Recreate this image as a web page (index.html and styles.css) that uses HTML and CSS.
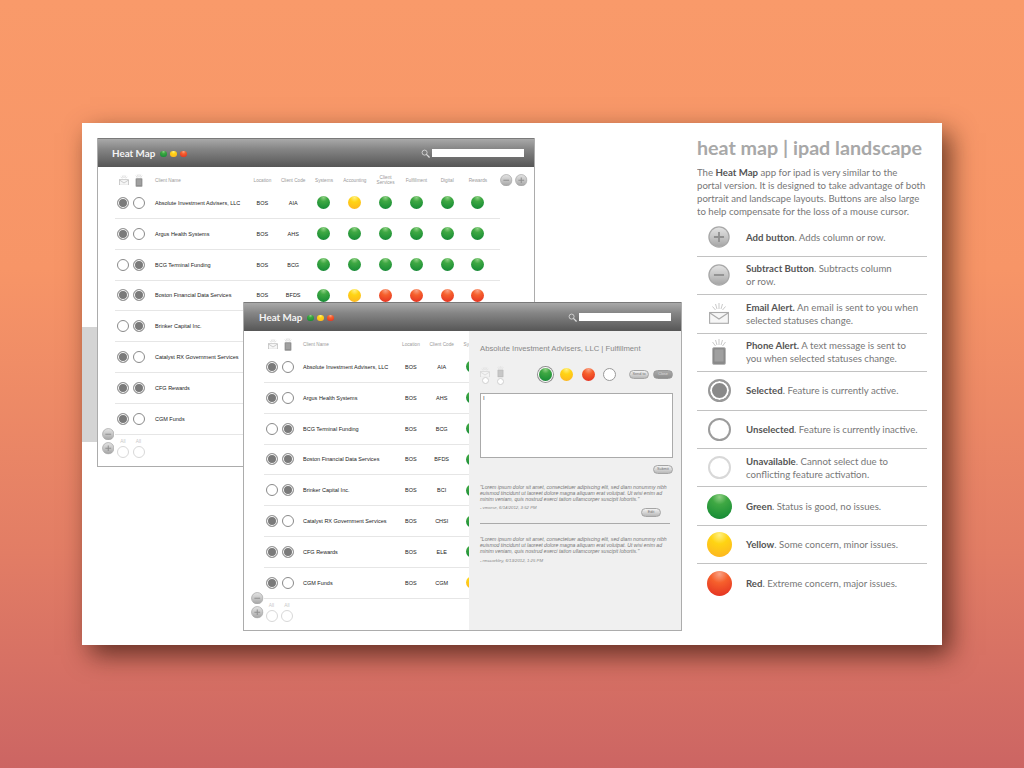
FILE: index.html
```html
<!DOCTYPE html>
<html>
<head>
    <title>Heat Map | iPad Landscape</title>
    <meta name="viewport" content="width=device-width, initial-scale=1">
    <link rel="stylesheet" href="styles.css">
</head>

<body>
    <svg class="icon-defs" width="0" height="0">
        <defs>
            <linearGradient id="btn-fill" x1="0" y1="0" x2="0" y2="1">
                <stop offset="0" stop-color="#e4e4e4"/>
                <stop offset="0.5" stop-color="#c6c6c6"/>
                <stop offset="1" stop-color="#a4a4a4"/>
            </linearGradient>
            <symbol id="icon-plus" viewBox="0 0 24 24">
                <circle cx="12" cy="12" r="11" fill="url(#btn-fill)" stroke="#a8a8a8" stroke-width="1.4"/>
                <path d="M12 6.5v11M6.5 12h11" stroke="#909090" stroke-width="2" fill="none"/>
            </symbol>
            <symbol id="icon-minus" viewBox="0 0 24 24">
                <circle cx="12" cy="12" r="11" fill="url(#btn-fill)" stroke="#a8a8a8" stroke-width="1.4"/>
                <path d="M6.5 12h11" stroke="#909090" stroke-width="2" fill="none"/>
            </symbol>
            <symbol id="icon-mail" viewBox="0 0 20 21">
                <path d="M10 0v6M6.5 1l1.5 5M13.500 1l-1.500 5M3.500 3.500l3 3.500M16.500 3.500l-3 3.500" stroke="#bbb" stroke-width="0.8" fill="none"/>
                <rect x="0.6" y="9.500" width="18.800" height="10.800" fill="#f6f6f6" stroke="#aaa" stroke-width="1.100"/>
                <path d="M1 10l9 6 9-6" stroke="#aaa" stroke-width="1.100" fill="none"/>
            </symbol>
            <symbol id="icon-phone" viewBox="0 0 20 26">
                <path d="M10 0v6M6.500 1l1.500 5M13.500 1l-1.500 5M3.500 3l3 4M16.500 3l-3 4" stroke="#bbb" stroke-width="0.8" fill="none"/>
                <rect x="3.500" y="8.500" width="13" height="17" rx="1.500" fill="#8a8a8a" stroke="#b5b5b5" stroke-width="0.800"/>
                <rect x="5.500" y="10.500" width="9" height="12" fill="#a0a0a0"/>
            </symbol>
        </defs>
    </svg>

    <div class="sheet">
        <div class="side-tab"></div>

        <!-- portal view, back window -->
        <div class="window window-back">
            <div class="titlebar">
                <span class="app-name">Heat Map</span>
                <span class="dot dot-tiny green"></span>
                <span class="dot dot-tiny yellow"></span>
                <span class="dot dot-tiny red"></span>
                <span class="search">
                    <svg class="search-icon" viewBox="0 0 10 10"><circle cx="4" cy="4" r="2.800" fill="none" stroke="#ddd" stroke-width="0.900"/><path d="M6 6l3.500 3.500" stroke="#ddd" stroke-width="1.400"/></svg>
                    <span class="search-box"></span>
                </span>
            </div>
            <div class="table">
                <div class="row row-head">
                    <div class="alerts">
                        <svg class="head-mail"><use href="#icon-mail"/></svg>
                        <svg class="head-phone"><use href="#icon-phone"/></svg>
                    </div>
                    <div class="name">Client Name</div>
                    <div class="cell">Location</div>
                    <div class="cell">Client Code</div>
                    <div class="cell">Systems</div>
                    <div class="cell">Accounting</div>
                    <div class="cell">Client Services</div>
                    <div class="cell">Fulfillment</div>
                    <div class="cell">Digital</div>
                    <div class="cell">Rewards</div>
                </div>
                <div class="row">
                    <div class="alerts"><span class="radio on"></span><span class="radio"></span></div>
                    <div class="name">Absolute Investment Advisers, LLC</div>
                    <div class="cell">BOS</div><div class="cell">AIA</div>
                    <div class="cell"><span class="dot green"></span></div>
                    <div class="cell"><span class="dot yellow"></span></div>
                    <div class="cell"><span class="dot green"></span></div>
                    <div class="cell"><span class="dot green"></span></div>
                    <div class="cell"><span class="dot green"></span></div>
                    <div class="cell"><span class="dot green"></span></div>
                </div>
                <div class="row">
                    <div class="alerts"><span class="radio on"></span><span class="radio"></span></div>
                    <div class="name">Argus Health Systems</div>
                    <div class="cell">BOS</div><div class="cell">AHS</div>
                    <div class="cell"><span class="dot green"></span></div>
                    <div class="cell"><span class="dot green"></span></div>
                    <div class="cell"><span class="dot green"></span></div>
                    <div class="cell"><span class="dot green"></span></div>
                    <div class="cell"><span class="dot green"></span></div>
                    <div class="cell"><span class="dot green"></span></div>
                </div>
                <div class="row">
                    <div class="alerts"><span class="radio"></span><span class="radio on"></span></div>
                    <div class="name">BCG Terminal Funding</div>
                    <div class="cell">BOS</div><div class="cell">BCG</div>
                    <div class="cell"><span class="dot green"></span></div>
                    <div class="cell"><span class="dot green"></span></div>
                    <div class="cell"><span class="dot green"></span></div>
                    <div class="cell"><span class="dot green"></span></div>
                    <div class="cell"><span class="dot green"></span></div>
                    <div class="cell"><span class="dot green"></span></div>
                </div>
                <div class="row">
                    <div class="alerts"><span class="radio on"></span><span class="radio on"></span></div>
                    <div class="name">Boston Financial Data Services</div>
                    <div class="cell">BOS</div><div class="cell">BFDS</div>
                    <div class="cell"><span class="dot green"></span></div>
                    <div class="cell"><span class="dot yellow"></span></div>
                    <div class="cell"><span class="dot red"></span></div>
                    <div class="cell"><span class="dot red"></span></div>
                    <div class="cell"><span class="dot red"></span></div>
                    <div class="cell"><span class="dot red"></span></div>
                </div>
                <div class="row">
                    <div class="alerts"><span class="radio"></span><span class="radio on"></span></div>
                    <div class="name">Brinker Capital Inc.</div>
                </div>
                <div class="row">
                    <div class="alerts"><span class="radio on"></span><span class="radio"></span></div>
                    <div class="name">Catalyst RX Government Services</div>
                </div>
                <div class="row">
                    <div class="alerts"><span class="radio on"></span><span class="radio on"></span></div>
                    <div class="name">CFG Rewards</div>
                </div>
                <div class="row">
                    <div class="alerts"><span class="radio on"></span><span class="radio"></span></div>
                    <div class="name">CGM Funds</div>
                </div>
                <div class="all-row">
                    <span class="all-col">All<span class="radio off"></span></span>
                    <span class="all-col">All<span class="radio off"></span></span>
                </div>
            </div>
            <div class="col-buttons">
                <svg class="round-btn"><use href="#icon-minus"/></svg>
                <svg class="round-btn"><use href="#icon-plus"/></svg>
            </div>
            <div class="row-buttons">
                <svg class="round-btn"><use href="#icon-minus"/></svg>
                <svg class="round-btn"><use href="#icon-plus"/></svg>
            </div>
        </div>

        <!-- landscape view with the detail panel open -->
        <div class="window window-front">
            <div class="titlebar">
                <span class="app-name">Heat Map</span>
                <span class="dot dot-tiny green"></span>
                <span class="dot dot-tiny yellow"></span>
                <span class="dot dot-tiny red"></span>
                <span class="search">
                    <svg class="search-icon" viewBox="0 0 10 10"><circle cx="4" cy="4" r="2.800" fill="none" stroke="#ddd" stroke-width="0.900"/><path d="M6 6l3.500 3.500" stroke="#ddd" stroke-width="1.400"/></svg>
                    <span class="search-box"></span>
                </span>
            </div>
            <div class="table">
                <div class="row row-head">
                    <div class="alerts">
                        <svg class="head-mail"><use href="#icon-mail"/></svg>
                        <svg class="head-phone"><use href="#icon-phone"/></svg>
                    </div>
                    <div class="name">Client Name</div>
                    <div class="cell">Location</div>
                    <div class="cell">Client Code</div>
                    <div class="cell">Systems</div>
                </div>
                <div class="row">
                    <div class="alerts"><span class="radio on"></span><span class="radio"></span></div>
                    <div class="name">Absolute Investment Advisers, LLC</div>
                    <div class="cell">BOS</div><div class="cell">AIA</div>
                    <div class="cell"><span class="dot green"></span></div>
                </div>
                <div class="row">
                    <div class="alerts"><span class="radio on"></span><span class="radio"></span></div>
                    <div class="name">Argus Health Systems</div>
                    <div class="cell">BOS</div><div class="cell">AHS</div>
                    <div class="cell"><span class="dot green"></span></div>
                </div>
                <div class="row">
                    <div class="alerts"><span class="radio"></span><span class="radio on"></span></div>
                    <div class="name">BCG Terminal Funding</div>
                    <div class="cell">BOS</div><div class="cell">BCG</div>
                    <div class="cell"><span class="dot green"></span></div>
                </div>
                <div class="row">
                    <div class="alerts"><span class="radio on"></span><span class="radio on"></span></div>
                    <div class="name">Boston Financial Data Services</div>
                    <div class="cell">BOS</div><div class="cell">BFDS</div>
                    <div class="cell"><span class="dot green"></span></div>
                </div>
                <div class="row">
                    <div class="alerts"><span class="radio"></span><span class="radio on"></span></div>
                    <div class="name">Brinker Capital Inc.</div>
                    <div class="cell">BOS</div><div class="cell">BCI</div>
                    <div class="cell"><span class="dot green"></span></div>
                </div>
                <div class="row">
                    <div class="alerts"><span class="radio on"></span><span class="radio"></span></div>
                    <div class="name">Catalyst RX Government Services</div>
                    <div class="cell">BOS</div><div class="cell">CHSI</div>
                    <div class="cell"><span class="dot green"></span></div>
                </div>
                <div class="row">
                    <div class="alerts"><span class="radio on"></span><span class="radio on"></span></div>
                    <div class="name">CFG Rewards</div>
                    <div class="cell">BOS</div><div class="cell">ELE</div>
                    <div class="cell"><span class="dot green"></span></div>
                </div>
                <div class="row">
                    <div class="alerts"><span class="radio on"></span><span class="radio"></span></div>
                    <div class="name">CGM Funds</div>
                    <div class="cell">BOS</div><div class="cell">CGM</div>
                    <div class="cell"><span class="dot yellow"></span></div>
                </div>
                <div class="all-row">
                    <span class="all-col">All<span class="radio off"></span></span>
                    <span class="all-col">All<span class="radio off"></span></span>
                </div>
            </div>
            <div class="row-buttons">
                <svg class="round-btn"><use href="#icon-minus"/></svg>
                <svg class="round-btn"><use href="#icon-plus"/></svg>
            </div>

            <div class="panel">
                <h3 class="panel-title">Absolute Investment Advisers, LLC | Fulfillment</h3>
                <div class="panel-tools">
                    <div class="tool">
                        <svg class="tool-mail"><use href="#icon-mail"/></svg>
                        <span class="radio radio-small"></span>
                    </div>
                    <div class="tool">
                        <svg class="tool-phone"><use href="#icon-phone"/></svg>
                        <span class="radio radio-small"></span>
                    </div>
                    <div class="lights">
                        <span class="dot dot-picked green"></span>
                        <span class="dot yellow"></span>
                        <span class="dot red"></span>
                        <span class="dot blank"></span>
                    </div>
                    <div class="pills">
                        <span class="pill">Send to</span>
                        <span class="pill pill-dark">Close</span>
                    </div>
                </div>
                <div class="note-box">I</div>
                <div class="panel-action"><span class="pill">Submit</span></div>
                <p class="quote">"Lorem ipsum dolor sit amet, consectetuer adipiscing elit, sed diam nonummy nibh<br>euismod tincidunt ut laoreet dolore magna aliquam erat volutpat. Ut wisi enim ad<br>minim veniam, quis nostrud exerci tation ullamcorper suscipit lobortis."</p>
                <div class="signed">- vmorse, 6/14/2012, 3:52 PM</div>
                <div class="panel-action edit-action"><span class="pill">Edit</span></div>
                <hr class="panel-rule">
                <p class="quote">"Lorem ipsum dolor sit amet, consectetuer adipiscing elit, sed diam nonummy nibh<br>euismod tincidunt ut laoreet dolore magna aliquam erat volutpat. Ut wisi enim ad<br>minim veniam, quis nostrud exerci tation ullamcorper suscipit lobortis."</p>
                <div class="signed">- rmccorkley, 6/13/2012, 1:25 PM</div>
            </div>
        </div>

        <div class="about">
            <h2>heat map | ipad landscape</h2>
            <p class="intro">The <b>Heat Map</b> app for ipad is very similar to the<br>portal version. It is designed to take advantage of both<br>portrait and landscape layouts. Buttons are also large<br>to help compensate for the loss of a mouse cursor.</p>
            <ul class="legend">
                <li>
                    <span class="legend-icon"><svg class="legend-btn"><use href="#icon-plus"/></svg></span>
                    <span><b>Add button</b>. Adds column or row.</span>
                </li>
                <li>
                    <span class="legend-icon"><svg class="legend-btn"><use href="#icon-minus"/></svg></span>
                    <span><b>Subtract Button</b>. Subtracts column<br>or row.</span>
                </li>
                <li>
                    <span class="legend-icon"><svg class="legend-mail"><use href="#icon-mail"/></svg></span>
                    <span><b>Email Alert.</b> An email is sent to you when<br>selected statuses change.</span>
                </li>
                <li>
                    <span class="legend-icon"><svg class="legend-phone"><use href="#icon-phone"/></svg></span>
                    <span><b>Phone Alert.</b> A text message is sent to<br>you when selected statuses change.</span>
                </li>
                <li>
                    <span class="legend-icon"><span class="radio radio-big on"></span></span>
                    <span><b>Selected</b>. Feature is currently active.</span>
                </li>
                <li>
                    <span class="legend-icon"><span class="radio radio-big"></span></span>
                    <span><b>Unselected</b>. Feature is currently inactive.</span>
                </li>
                <li>
                    <span class="legend-icon"><span class="radio radio-big off"></span></span>
                    <span><b>Unavailable</b>. Cannot select due to<br>conflicting feature activation.</span>
                </li>
                <li>
                    <span class="legend-icon"><span class="dot dot-big green"></span></span>
                    <span><b>Green</b>. Status is good, no issues.</span>
                </li>
                <li>
                    <span class="legend-icon"><span class="dot dot-big yellow"></span></span>
                    <span><b>Yellow</b>. Some concern, minor issues.</span>
                </li>
                <li>
                    <span class="legend-icon"><span class="dot dot-big red"></span></span>
                    <span><b>Red</b>. Extreme concern, major issues.</span>
                </li>
            </ul>
        </div>
    </div>
</body>
</html>
```

FILE: styles.css
```css
html, body {
    height: 100%;
    margin: 0;
}

body {
    background: linear-gradient(#f99a6a 0%, #f79567 35%, #e27d65 72%, #cc6563 100%);
    font-family: "Liberation Sans", Arial, sans-serif;
    overflow: hidden;
}

.icon-defs {
    position: absolute;
}

.sheet {
    position: absolute;
    left: 82px;
    top: 123px;
    width: 860px;
    height: 522px;
    background: white;
    box-shadow: 8px 10px 24px rgba(50, 20, 10, 0.7);
    display: flex;
    justify-content: flex-end;
}

.side-tab {
    position: absolute;
    left: 0;
    top: 204px;
    width: 15px;
    height: 115px;
    background-color: #d4d4d4;
}

/* app windows sit free on the sheet */
.window {
    position: absolute;
    height: 329px;
    box-sizing: border-box;
    border: 1px solid #acacac;
    border-top: 0;
    background: white;
    overflow: hidden;
    opacity: 0.999;
}

.window-back {
    left: 15px;
    top: 15px;
    width: 438px;
}

.window-front {
    left: 161px;
    top: 179px;
    width: 439px;
}

.titlebar {
    height: 29px;
    box-sizing: border-box;
    border-top: 1px solid #7a7a7a;
    background: linear-gradient(#a9a9a9, #868686 35%, #565656);
    display: flex;
    align-items: center;
    padding-left: 14px;
    gap: 3.500px;
}

.window-front .titlebar {
    padding-left: 15px;
}

.app-name {
    font-family: Lato, sans-serif;
    font-weight: 700;
    font-size: 9.800px;
    color: #f4f4f4;
    margin-right: 1.500px;
}

.search {
    margin-left: auto;
    display: flex;
    align-items: center;
    gap: 2px;
    padding-right: 10px;
}

.search-icon {
    width: 9px;
    height: 9px;
}

.search-box {
    width: 92px;
    height: 8px;
    background: white;
}

.table {
    padding-left: 17px;
    width: 385px;
}

.window-front .table {
    padding-left: 19.500px;
}

.row {
    display: grid;
    grid-template-columns: 28px 102px repeat(8, 30.8px);
    align-items: center;
    box-sizing: border-box;
    height: 30.850px;
    padding-left: 2px;
    border-bottom: 1px solid #e6e6e6;
    font-size: 5.500px;
    color: #222;
}

.row-head {
    height: 21px;
    padding-top: 5px;
    border-bottom: 0;
    font-size: 4.700px;
    color: #999;
}

.row-head .name {
    font-weight: normal;
}

.alerts {
    display: flex;
    align-items: center;
    gap: 4px;
}

.name {
    padding-left: 10px;
    font-weight: 500;
    white-space: nowrap;
}

.window-front .name {
    padding-left: 9.500px;
}

.cell {
    text-align: center;
    display: flex;
    justify-content: center;
    align-items: center;
}

.head-mail {
    width: 10px;
    height: 10.500px;
    margin-left: 2px;
}

.head-phone {
    width: 10px;
    height: 13px;
    margin-left: 1px;
}

.radio {
    display: inline-block;
    width: 12px;
    height: 12px;
    box-sizing: border-box;
    border: 1px solid #8a8a8a;
    border-radius: 50%;
    background: white;
    flex: none;
}

.radio.on {
    background: #7a7a7a;
    box-shadow: inset 0 0 0 1px white;
    border-color: #9a9a9a;
}

.radio.off {
    border-color: #d8d8d8;
}

.radio-small {
    width: 7px;
    height: 7px;
    border-color: #d0d0d0;
}

.radio-big {
    width: 23px;
    height: 23px;
    border: 2px solid #9c9c9c;
}

.radio-big.on {
    background: #8a8a8a;
    box-shadow: inset 0 0 0 2px white;
    border-color: #999;
}

.dot {
    display: inline-block;
    width: 13px;
    height: 13px;
    border-radius: 50%;
    flex: none;
}

.dot.green {
    background: radial-gradient(circle at 50% 12%, #8fd084 0, #3fa843 30%, #1f9238 75%, #0f7c36 100%);
}

.dot.yellow {
    background: radial-gradient(circle at 50% 12%, #fff080 0, #ffd413 35%, #fcb023 100%);
}

.dot.red {
    background: radial-gradient(circle at 50% 12%, #f9a184 0, #f6602c 35%, #e12a20 100%);
}

.dot.blank {
    background: white;
    border: 1px solid #999;
    box-sizing: border-box;
}

.dot-tiny {
    width: 6.500px;
    height: 6.500px;
    margin-top: 2px;
}

.dot-big {
    width: 25px;
    height: 25px;
}

.dot-picked {
    box-shadow: 0 0 0 1px white, 0 0 0 2px #8f8f8f;
}

.all-row {
    display: flex;
    gap: 3.500px;
    padding-left: 2px;
    padding-top: 4.500px;
}

.all-col {
    display: flex;
    flex-direction: column;
    align-items: center;
    gap: 2px;
    font-size: 4.800px;
    color: #c8c8c8;
}

.round-btn {
    width: 12.500px;
    height: 12.500px;
    display: block;
}

.col-buttons {
    position: absolute;
    left: 402px;
    top: 35.750px;
    display: flex;
    gap: 2.500px;
}

.row-buttons {
    position: absolute;
    left: 3.500px;
    top: 289.750px;
    display: flex;
    flex-direction: column;
    gap: 2px;
}

.window-front .row-buttons {
    left: 7px;
}

/* detail panel over the right of the table */
.panel {
    position: absolute;
    top: 29px;
    right: 0;
    bottom: 0;
    width: 212px;
    box-sizing: border-box;
    padding: 13px 8px 0 11px;
    background-color: #f0f0f0;
    color: #888;
}

.panel-title {
    margin: 0;
    font-size: 7.700px;
    font-weight: normal;
    color: #888;
    line-height: 10px;
}

.panel-tools {
    display: flex;
    align-items: center;
    margin-top: 10px;
    height: 20px;
}

.tool {
    display: flex;
    flex-direction: column;
    align-items: center;
    width: 10px;
    margin-right: 6px;
    margin-top: 3px;
}

.tool-mail {
    width: 10px;
    height: 10.500px;
    opacity: 0.500;
}

.tool-phone {
    width: 9px;
    height: 11.500px;
    opacity: 0.500;
}

.lights {
    display: flex;
    align-items: center;
    gap: 8.500px;
    margin-left: 27px;
}

.pills {
    display: flex;
    align-items: center;
    gap: 4px;
    margin-left: 13px;
}

.pill {
    display: block;
    width: 20px;
    height: 9px;
    box-sizing: border-box;
    line-height: 7px;
    border-radius: 5px;
    border: 1px solid #a5a5a5;
    background: linear-gradient(#f2f2f2, #b8b8b8);
    text-align: center;
    font-size: 3.800px;
    color: #777;
}

.pill-dark {
    background: linear-gradient(#a9a9a9, #8f8f8f);
    border-color: #999;
    color: #ddd;
}

.note-box {
    margin-top: 9px;
    width: 193px;
    height: 65px;
    box-sizing: border-box;
    border: 1px solid #aaa;
    background: white;
    padding: 1px 2px;
    font-size: 6px;
    color: #555;
    line-height: 7px;
}

.panel-action {
    display: flex;
    justify-content: flex-end;
    width: 193px;
    margin-top: 7px;
}

.quote {
    margin: 9.700px 0 0;
    font-size: 5.130px;
    font-style: italic;
    line-height: 6px;
    color: #777;
    white-space: nowrap;
}

.signed {
    margin-top: 3.500px;
    font-size: 4.300px;
    line-height: 5px;
    font-style: italic;
    color: #888;
}

.edit-action {
    margin-top: -2.200px;
    width: 181px;
}

.panel-rule {
    margin: 6px 0 0;
    width: 190px;
    border: 0;
    border-top: 1px solid #aaa;
}

.panel-rule + .quote {
    margin-top: 11.700px;
}

.panel-rule ~ .signed {
    margin-top: 4.800px;
}

/* copy column */
.about {
    width: 230px;
    margin-right: 15px;
    padding-top: 13px;
    font-family: Lato, sans-serif;
    color: #777;
    opacity: 0.999;
}

.about h2 {
    margin: 0;
    font-size: 19.700px;
    line-height: 24px;
    font-weight: 700;
    color: #a8a8a8;
    white-space: nowrap;
}

.intro {
    margin: 5.500px 0 0;
    font-size: 9.650px;
    line-height: 13.200px;
    white-space: nowrap;
}

.about b {
    color: #555;
}

.legend {
    list-style: none;
    margin: 0;
    padding: 0;
}

.legend li {
    display: flex;
    align-items: center;
    box-sizing: border-box;
    height: 38.450px;
    border-bottom: 1px solid #c2c2c2;
    font-size: 9.650px;
    line-height: 13px;
    white-space: nowrap;
}

.legend li:last-child {
    border-bottom: 0;
}

.legend-icon {
    width: 49px;
    padding-right: 5px;
    box-sizing: border-box;
    flex: none;
    display: flex;
    justify-content: center;
    align-items: center;
}

.legend-btn {
    width: 22px;
    height: 22px;
}

.legend-mail {
    width: 20px;
    height: 21px;
}

.legend-phone {
    width: 20px;
    height: 26px;
}
```
